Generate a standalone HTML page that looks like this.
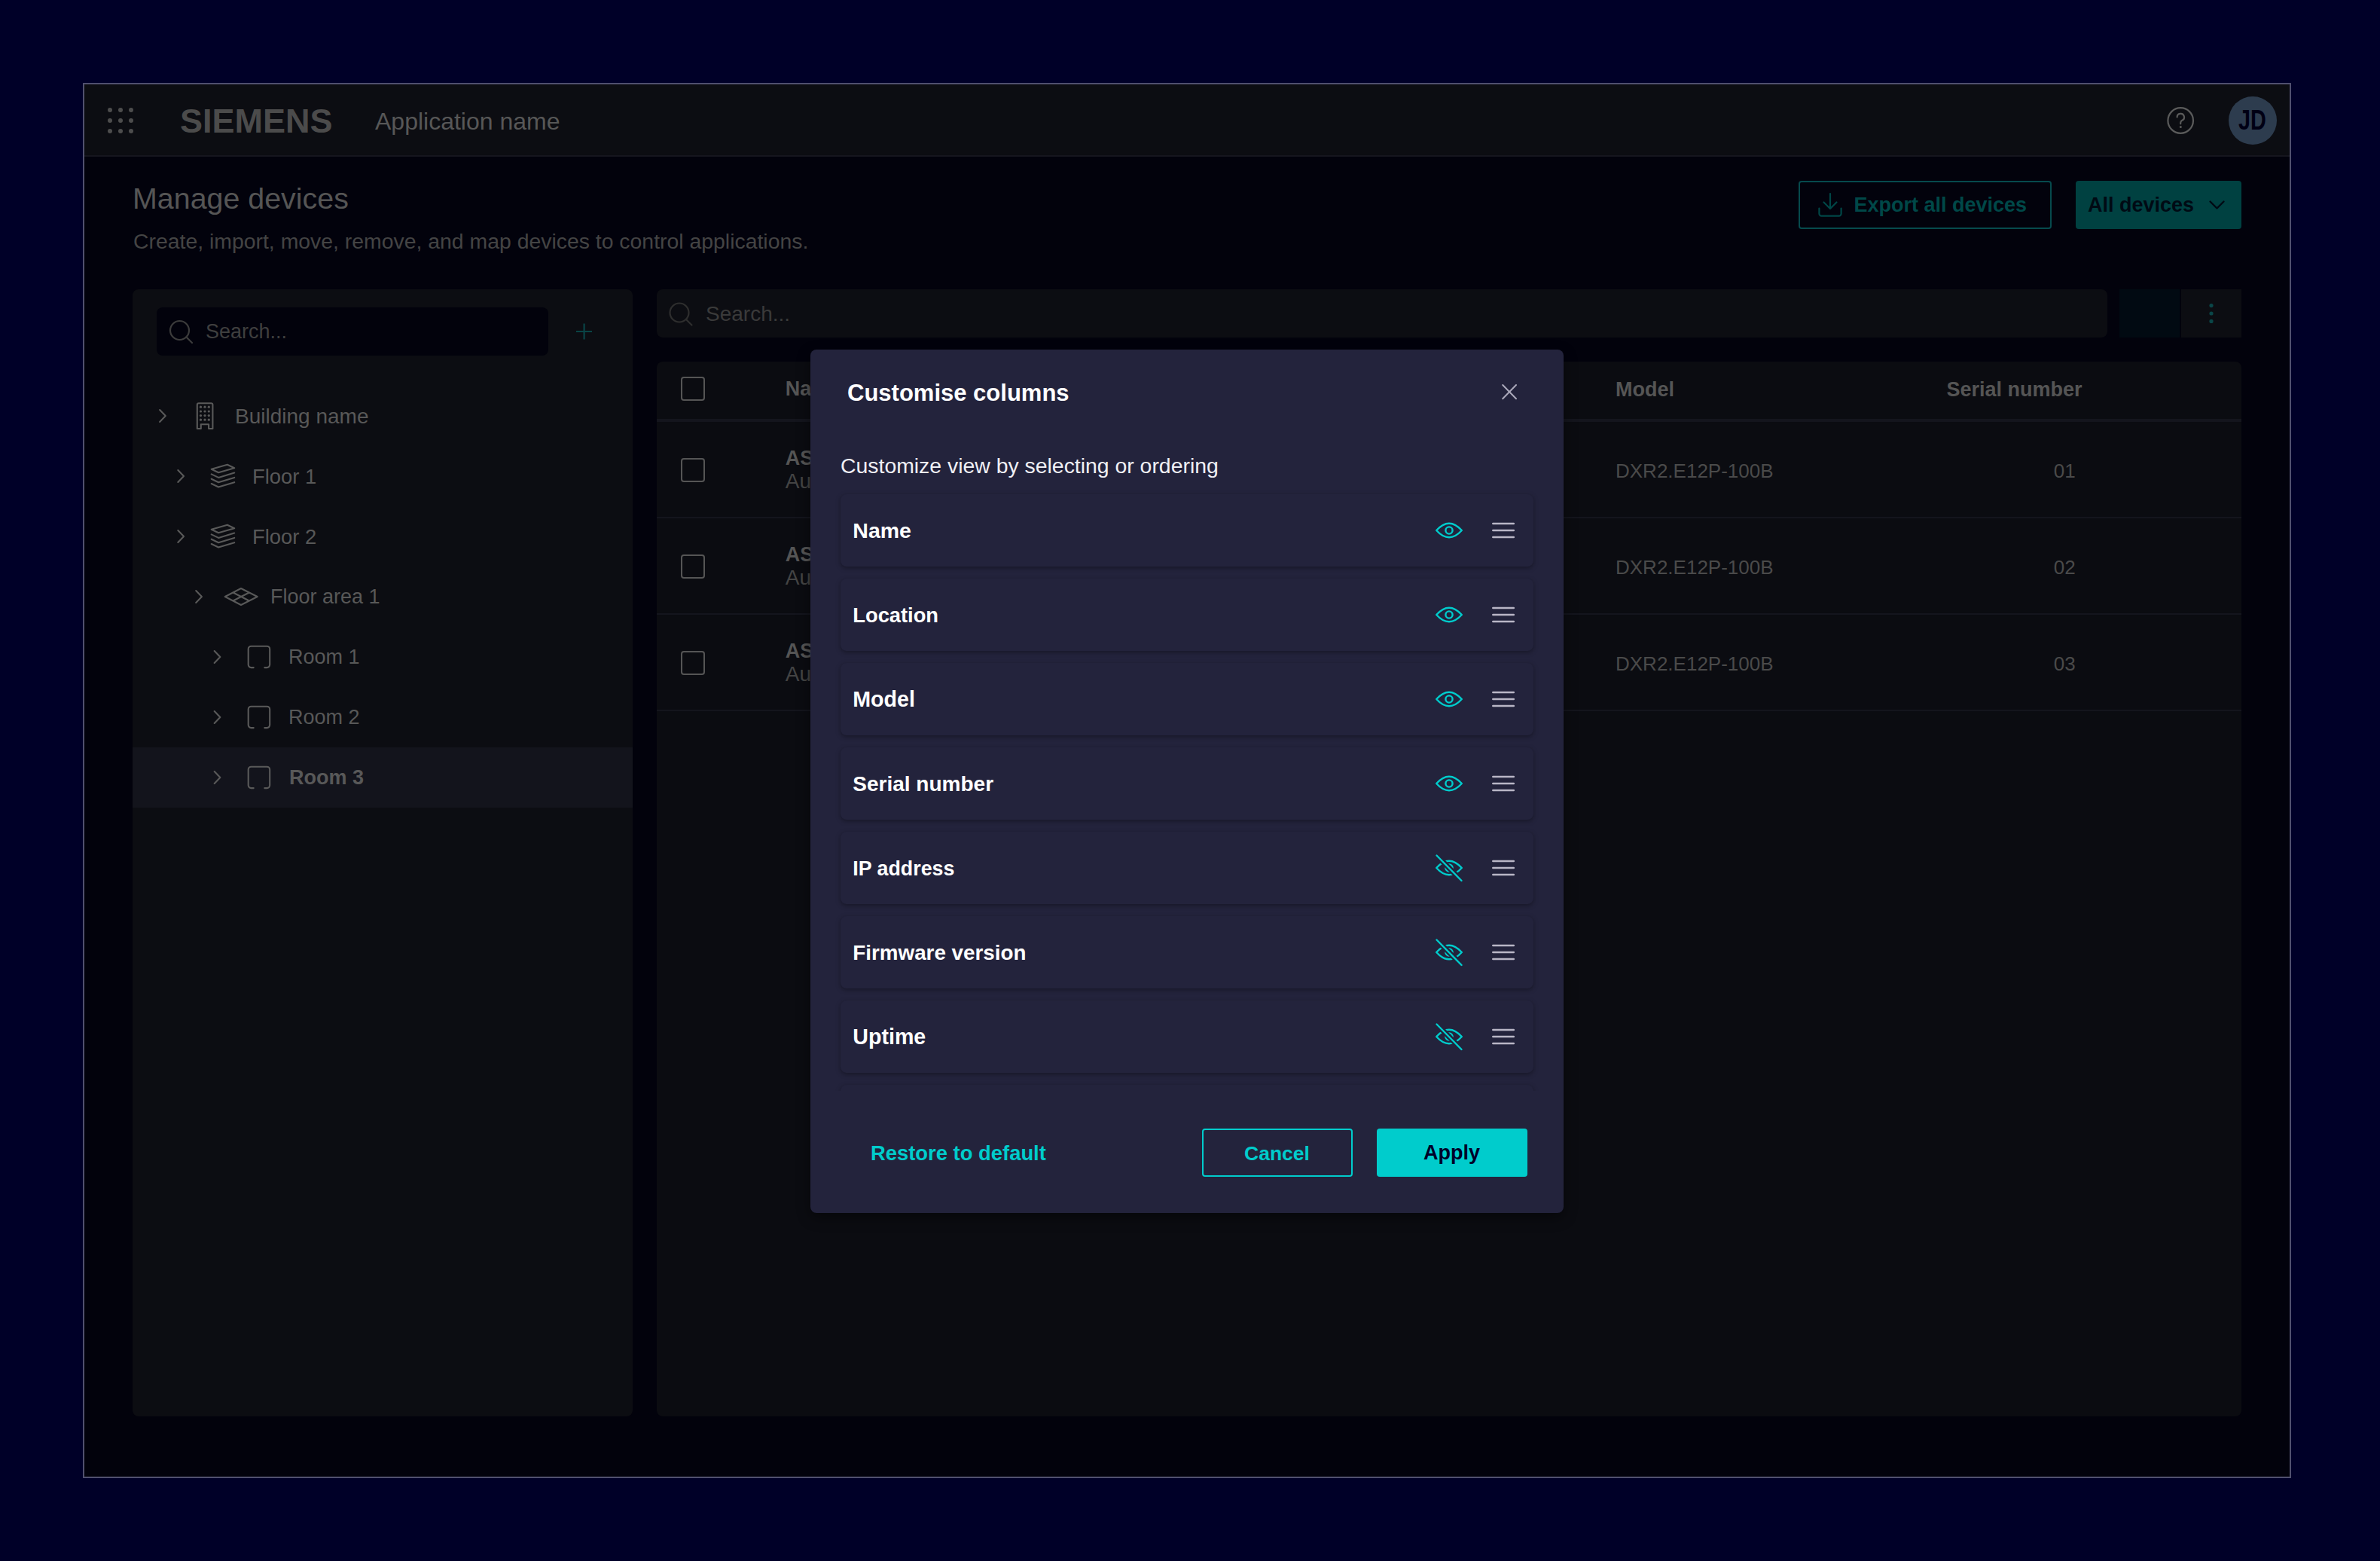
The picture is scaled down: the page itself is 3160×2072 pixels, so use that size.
<!DOCTYPE html>
<html><head><meta charset="utf-8">
<style>
html,body{margin:0;padding:0;}
body{width:3160px;height:2072px;overflow:hidden;background:#000028;position:relative;font-family:"Liberation Sans",sans-serif;}
.a{position:absolute;}
.t{position:absolute;white-space:nowrap;line-height:1;}
.b{font-weight:700;}
svg.i{position:absolute;left:0;top:0;overflow:visible;}
</style></head><body>
<div class="a" style="left:110px;top:110px;width:2932px;height:1852px;box-sizing:border-box;border:2px solid #50506e;background:#02020c;"></div>
<div class="a" style="left:112px;top:112px;width:2928px;height:94px;background:#0c0d12;"></div>
<div class="a" style="left:112px;top:206px;width:2928px;height:2px;background:#16161e;"></div>
<svg class="i" width="3160" height="2072"><g fill="#4d4d4d"><circle cx="146" cy="146" r="3"/><circle cx="146" cy="160" r="3"/><circle cx="146" cy="174" r="3"/><circle cx="160" cy="146" r="3"/><circle cx="160" cy="160" r="3"/><circle cx="160" cy="174" r="3"/><circle cx="174" cy="146" r="3"/><circle cx="174" cy="160" r="3"/><circle cx="174" cy="174" r="3"/></g></svg>
<div class="t b" style="left:239px;top:137.9px;font-size:45px;color:#4b4b4b;">SIEMENS</div>
<div class="t" style="left:498px;top:145.3px;font-size:32px;color:#575757;">Application name</div>
<svg class="i" width="3160" height="2072">
<circle cx="2895.2" cy="160" r="16.8" fill="none" stroke="#5a5a5a" stroke-width="2.2"/>
<path d="M2890.6 155.5 a4.7 4.7 0 1 1 6.6 4.3 c-1.5 0.8 -2 1.6 -2 3.2 v1.3" fill="none" stroke="#5a5a5a" stroke-width="2.2" stroke-linecap="round"/>
<circle cx="2895.3" cy="168.6" r="1.5" fill="#5a5a5a"/>
<circle cx="2991" cy="160" r="32" fill="#2d3c4e"/>
</svg>
<div class="t b" style="left:2971.6px;top:141.7px;font-size:36px;color:#000014;transform:scaleX(0.8);transform-origin:0 0;">JD</div>
<div class="t" style="left:176px;top:244.3px;font-size:39.4px;color:#555555;">Manage devices</div>
<div class="t" style="left:177px;top:306.2px;font-size:28.4px;color:#444444;">Create, import, move, remove, and map devices to control applications.</div>
<div class="a" style="left:2388px;top:240px;width:336px;height:64px;box-sizing:border-box;border:2px solid #064a4d;border-radius:4px;"></div>
<svg class="i" width="3160" height="2072"><g fill="none" stroke="#004646" stroke-width="2.2" stroke-linecap="round" stroke-linejoin="round">
<path d="M2430 257 V276.5 M2421.5 268.5 L2430 277 L2438.5 268.5"/>
<path d="M2415.4 276.6 V283.6 a3 3 0 0 0 3 3 H2441.6 a3 3 0 0 0 3 -3 V276.6"/>
</g></svg>
<div class="t b" style="left:2461.5px;top:259.3px;font-size:27px;color:#004848;">Export all devices</div>
<div class="a" style="left:2756px;top:240px;width:220px;height:64px;background:#004141;border-radius:4px;"></div>
<div class="t b" style="left:2772px;top:259.3px;font-size:27px;color:#000a14;">All devices</div>
<svg class="i" width="3160" height="2072"><path d="M2934.5 267.5 L2943.5 276.5 L2952.5 267.5" fill="none" stroke="#000a14" stroke-width="2.4" stroke-linecap="round" stroke-linejoin="round"/></svg>
<div class="a" style="left:176px;top:384px;width:664px;height:1496px;background:#0c0d12;border-radius:8px;"></div>
<div class="a" style="left:208px;top:408px;width:520px;height:64px;background:#02020c;border-radius:8px;"></div>
<svg class="i" width="3160" height="2072"><g fill="none" stroke="#3c3c3c" stroke-width="2.2" stroke-linecap="round">
<circle cx="238.5" cy="438.5" r="12.5"/><path d="M247.5 447.5 L255 455"/></g>
<path d="M775.6 429.5 V450.5 M765 440 H786" fill="none" stroke="#094446" stroke-width="2.2"/>
</svg>
<div class="t" style="left:273px;top:427.1px;font-size:27px;color:#3f3f3f;">Search...</div>
<div class="a" style="left:176px;top:992px;width:664px;height:80px;background:#13141c;"></div>
<svg class="i" width="3160" height="2072"><g fill="none" stroke="#595959" stroke-width="2.1" stroke-linecap="round" stroke-linejoin="round"><path d="M212.1 544 L219.79999999999998 552 L212.1 560"/><path d="M261.8 569 V537.3 a2 2 0 0 1 2 -2 H280.4 a2 2 0 0 1 2 2 V569 H277.1 V563.2 H266.8 V569 Z"/><circle cx="266.5" cy="540.2" r="1.6" fill="#595959" stroke="none"/><circle cx="266.5" cy="546" r="1.6" fill="#595959" stroke="none"/><circle cx="266.5" cy="551.6" r="1.6" fill="#595959" stroke="none"/><circle cx="266.5" cy="557.2" r="1.6" fill="#595959" stroke="none"/><circle cx="272" cy="540.2" r="1.6" fill="#595959" stroke="none"/><circle cx="272" cy="546" r="1.6" fill="#595959" stroke="none"/><circle cx="272" cy="551.6" r="1.6" fill="#595959" stroke="none"/><circle cx="272" cy="557.2" r="1.6" fill="#595959" stroke="none"/><circle cx="277.3" cy="540.2" r="1.6" fill="#595959" stroke="none"/><circle cx="277.3" cy="546" r="1.6" fill="#595959" stroke="none"/><circle cx="277.3" cy="551.6" r="1.6" fill="#595959" stroke="none"/><circle cx="277.3" cy="557.2" r="1.6" fill="#595959" stroke="none"/><path d="M236.3 624 L244.0 632 L236.3 640"/><path d="M280.7 622.7 L301.8 616.7 L311.2 621.3 L290.1 627.2 Z"/><path d="M280.7 629.4 L290.1 633.9 L311.2 627.6"/><path d="M280.7 635.6999999999999 L290.1 640.1999999999999 L311.2 633.9"/><path d="M280.7 642.0 L290.1 646.5 L311.2 640.2"/><path d="M236.3 704 L244.0 712 L236.3 720"/><path d="M280.7 702.7 L301.8 696.7 L311.2 701.3 L290.1 707.2 Z"/><path d="M280.7 709.4 L290.1 713.9 L311.2 707.6"/><path d="M280.7 715.6999999999999 L290.1 720.1999999999999 L311.2 713.9"/><path d="M280.7 722.0 L290.1 726.5 L311.2 720.2"/><path d="M260.2 784 L267.90000000000003 792 L260.2 800"/><path d="M298.75 792 L320 781 L341.7 792 L320 803 Z M309.4 786.5 L330.9 797.5 M309.4 797.5 L330.9 786.5"/><path d="M284.65 864 L292.35 872 L284.65 880"/><path d="M336.7 886.1 H333.5 a3.8 3.8 0 0 1 -3.8 -3.8 V861.5 a3.8 3.8 0 0 1 3.8 -3.8 H354.4 a3.8 3.8 0 0 1 3.8 3.8 V882.3 a3.8 3.8 0 0 1 -3.8 3.8 H351.3"/><path d="M284.65 944 L292.35 952 L284.65 960"/><path d="M336.7 966.1 H333.5 a3.8 3.8 0 0 1 -3.8 -3.8 V941.5 a3.8 3.8 0 0 1 3.8 -3.8 H354.4 a3.8 3.8 0 0 1 3.8 3.8 V962.3 a3.8 3.8 0 0 1 -3.8 3.8 H351.3"/><path d="M284.65 1024 L292.35 1032 L284.65 1040"/><path d="M336.7 1046.1 H333.5 a3.8 3.8 0 0 1 -3.8 -3.8 V1021.5 a3.8 3.8 0 0 1 3.8 -3.8 H354.4 a3.8 3.8 0 0 1 3.8 3.8 V1042.3 a3.8 3.8 0 0 1 -3.8 3.8 H351.3"/></g></svg>
<div class="t" style="left:312px;top:538.5px;font-size:28px;color:#585858;">Building name</div>
<div class="t" style="left:335px;top:619.0px;font-size:27.4px;color:#585858;">Floor 1</div>
<div class="t" style="left:335px;top:699.0px;font-size:27.4px;color:#585858;">Floor 2</div>
<div class="t" style="left:359px;top:779.3px;font-size:27px;color:#585858;">Floor area 1</div>
<div class="t" style="left:383px;top:859.3px;font-size:27px;color:#585858;">Room 1</div>
<div class="t" style="left:383px;top:939.3px;font-size:27px;color:#585858;">Room 2</div>
<div class="t b" style="left:384px;top:1019.3px;font-size:27px;color:#585858;">Room 3</div>
<div class="a" style="left:872px;top:384px;width:1926px;height:64px;background:#0c0d12;border-radius:8px;"></div>
<div class="a" style="left:2814px;top:384px;width:80px;height:64px;background:#010a12;"></div>
<div class="a" style="left:2896px;top:384px;width:80px;height:64px;background:#0c0d12;"></div>
<svg class="i" width="3160" height="2072"><g fill="none" stroke="#2e2e2e" stroke-width="2.2" stroke-linecap="round">
<circle cx="902" cy="415" r="12.5"/><path d="M911 424 L918.5 431.5"/></g>
<g fill="#0a4648"><circle cx="2936" cy="405.6" r="2.6"/><circle cx="2936" cy="416" r="2.6"/><circle cx="2936" cy="426.4" r="2.6"/></g>
</svg>
<div class="t" style="left:937px;top:403.0px;font-size:28px;color:#3a3a3a;">Search...</div>
<div class="a" style="left:872px;top:480px;width:2104px;height:1400px;background:#0b0c11;border-radius:8px;"></div>
<div class="a" style="left:872px;top:556px;width:2104px;height:4px;background:#14151d;"></div>
<div class="a" style="left:872px;top:686px;width:2104px;height:2px;background:#14151d;"></div>
<div class="a" style="left:872px;top:814px;width:2104px;height:2px;background:#14151d;"></div>
<div class="a" style="left:872px;top:942px;width:2104px;height:2px;background:#14151d;"></div>
<div class="a" style="left:904px;top:500px;width:32px;height:32px;box-sizing:border-box;border:2px solid #555555;border-radius:4px;"></div>
<div class="a" style="left:904px;top:608px;width:32px;height:32px;box-sizing:border-box;border:2px solid #555555;border-radius:4px;"></div>
<div class="a" style="left:904px;top:736px;width:32px;height:32px;box-sizing:border-box;border:2px solid #555555;border-radius:4px;"></div>
<div class="a" style="left:904px;top:864px;width:32px;height:32px;box-sizing:border-box;border:2px solid #555555;border-radius:4px;"></div>
<div class="t b" style="left:1042.8px;top:502.6px;font-size:27px;color:#555555;">Name</div>
<div class="t b" style="left:2145px;top:503.9px;font-size:27px;color:#555555;">Model</div>
<div class="t b" style="left:2584.5px;top:503.9px;font-size:27px;color:#555555;">Serial number</div>
<div class="t b" style="left:1042.8px;top:594.6px;font-size:27px;color:#555555;">ASAP-01</div>
<div class="t" style="left:1042.8px;top:625.3px;font-size:28px;color:#444444;">Automation station</div>
<div class="t" style="left:2145px;top:611.8px;font-size:26px;color:#4a4a4a;">DXR2.E12P-100B</div>
<div class="t" style="left:2726.7px;top:611.8px;font-size:26px;color:#4a4a4a;">01</div>
<div class="t b" style="left:1042.8px;top:722.6px;font-size:27px;color:#555555;">ASAP-02</div>
<div class="t" style="left:1042.8px;top:753.3px;font-size:28px;color:#444444;">Automation station</div>
<div class="t" style="left:2145px;top:739.8px;font-size:26px;color:#4a4a4a;">DXR2.E12P-100B</div>
<div class="t" style="left:2726.7px;top:739.8px;font-size:26px;color:#4a4a4a;">02</div>
<div class="t b" style="left:1042.8px;top:850.6px;font-size:27px;color:#555555;">ASAP-03</div>
<div class="t" style="left:1042.8px;top:881.3px;font-size:28px;color:#444444;">Automation station</div>
<div class="t" style="left:2145px;top:867.8px;font-size:26px;color:#4a4a4a;">DXR2.E12P-100B</div>
<div class="t" style="left:2726.7px;top:867.8px;font-size:26px;color:#4a4a4a;">03</div>
<div class="a" style="left:1076px;top:464px;width:1000px;height:1146px;background:#23233c;border-radius:8px;box-shadow:0 6px 18px rgba(0,0,0,0.45);"></div>
<div class="t b" style="left:1125px;top:506.0px;font-size:31px;color:#ffffff;">Customise columns</div>
<svg class="i" width="3160" height="2072"><path d="M1995.2 511 L2013 529.2 M2013 511 L1995.2 529.2" fill="none" stroke="#aaa8ba" stroke-width="2" stroke-linecap="round"/></svg>
<div class="t" style="left:1116px;top:603.5px;font-size:28.4px;color:#f0f0f5;">Customize view by selecting or ordering</div>
<div class="a" style="left:1076px;top:640px;width:1000px;height:808px;overflow:hidden;">
<div class="a" style="left:40px;top:16px;width:920px;height:96px;background:#23233c;border-radius:8px;box-shadow:0 2px 6px rgba(0,0,0,0.35);"></div>
<div class="a" style="left:40px;top:128px;width:920px;height:96px;background:#23233c;border-radius:8px;box-shadow:0 2px 6px rgba(0,0,0,0.35);"></div>
<div class="a" style="left:40px;top:240px;width:920px;height:96px;background:#23233c;border-radius:8px;box-shadow:0 2px 6px rgba(0,0,0,0.35);"></div>
<div class="a" style="left:40px;top:352px;width:920px;height:96px;background:#23233c;border-radius:8px;box-shadow:0 2px 6px rgba(0,0,0,0.35);"></div>
<div class="a" style="left:40px;top:464px;width:920px;height:96px;background:#23233c;border-radius:8px;box-shadow:0 2px 6px rgba(0,0,0,0.35);"></div>
<div class="a" style="left:40px;top:576px;width:920px;height:96px;background:#23233c;border-radius:8px;box-shadow:0 2px 6px rgba(0,0,0,0.35);"></div>
<div class="a" style="left:40px;top:688px;width:920px;height:96px;background:#23233c;border-radius:8px;box-shadow:0 2px 6px rgba(0,0,0,0.35);"></div>
<div class="a" style="left:40px;top:800px;width:920px;height:96px;background:#23233c;border-radius:8px;box-shadow:0 2px 6px rgba(0,0,0,0.35);"></div>
<svg class="i" width="1000" height="808"><g fill="none" stroke="#00cccc" stroke-width="2.4" stroke-linejoin="round"><path d="M831.2 64 Q848 45.4 864.8 64 Q848 82.6 831.2 64 Z"/><circle cx="848" cy="64" r="4.6"/></g><g stroke="#b9b6c6" stroke-width="2.5" stroke-linecap="round"><path d="M906.3 55 H933.8 M906.3 64 H933.8 M906.3 73 H933.8"/></g><g fill="none" stroke="#00cccc" stroke-width="2.4" stroke-linejoin="round"><path d="M831.2 176 Q848 157.4 864.8 176 Q848 194.6 831.2 176 Z"/><circle cx="848" cy="176" r="4.6"/></g><g stroke="#b9b6c6" stroke-width="2.5" stroke-linecap="round"><path d="M906.3 167 H933.8 M906.3 176 H933.8 M906.3 185 H933.8"/></g><g fill="none" stroke="#00cccc" stroke-width="2.4" stroke-linejoin="round"><path d="M831.2 288 Q848 269.4 864.8 288 Q848 306.6 831.2 288 Z"/><circle cx="848" cy="288" r="4.6"/></g><g stroke="#b9b6c6" stroke-width="2.5" stroke-linecap="round"><path d="M906.3 279 H933.8 M906.3 288 H933.8 M906.3 297 H933.8"/></g><g fill="none" stroke="#00cccc" stroke-width="2.4" stroke-linejoin="round"><path d="M831.2 400 Q848 381.4 864.8 400 Q848 418.6 831.2 400 Z"/><circle cx="848" cy="400" r="4.6"/></g><g stroke="#b9b6c6" stroke-width="2.5" stroke-linecap="round"><path d="M906.3 391 H933.8 M906.3 400 H933.8 M906.3 409 H933.8"/></g><g fill="none" stroke-linecap="round" stroke-linejoin="round"><path stroke="#00cccc" stroke-width="2.4" d="M831.2 512 Q848 493.4 864.8 512 Q848 530.6 831.2 512 Z"/><circle stroke="#00cccc" stroke-width="2.4" cx="848" cy="512" r="4.6"/><path stroke="#23233c" stroke-width="7" stroke-linecap="butt" d="M835 499 L861 525.2"/><path stroke="#00cccc" stroke-width="2.4" d="M831.5 495.5 L864.5 529"/></g><g stroke="#b9b6c6" stroke-width="2.5" stroke-linecap="round"><path d="M906.3 503 H933.8 M906.3 512 H933.8 M906.3 521 H933.8"/></g><g fill="none" stroke-linecap="round" stroke-linejoin="round"><path stroke="#00cccc" stroke-width="2.4" d="M831.2 624 Q848 605.4 864.8 624 Q848 642.6 831.2 624 Z"/><circle stroke="#00cccc" stroke-width="2.4" cx="848" cy="624" r="4.6"/><path stroke="#23233c" stroke-width="7" stroke-linecap="butt" d="M835 611 L861 637.2"/><path stroke="#00cccc" stroke-width="2.4" d="M831.5 607.5 L864.5 641"/></g><g stroke="#b9b6c6" stroke-width="2.5" stroke-linecap="round"><path d="M906.3 615 H933.8 M906.3 624 H933.8 M906.3 633 H933.8"/></g><g fill="none" stroke-linecap="round" stroke-linejoin="round"><path stroke="#00cccc" stroke-width="2.4" d="M831.2 736 Q848 717.4 864.8 736 Q848 754.6 831.2 736 Z"/><circle stroke="#00cccc" stroke-width="2.4" cx="848" cy="736" r="4.6"/><path stroke="#23233c" stroke-width="7" stroke-linecap="butt" d="M835 723 L861 749.2"/><path stroke="#00cccc" stroke-width="2.4" d="M831.5 719.5 L864.5 753"/></g><g stroke="#b9b6c6" stroke-width="2.5" stroke-linecap="round"><path d="M906.3 727 H933.8 M906.3 736 H933.8 M906.3 745 H933.8"/></g><g fill="none" stroke-linecap="round" stroke-linejoin="round"><path stroke="#00cccc" stroke-width="2.4" d="M831.2 848 Q848 829.4 864.8 848 Q848 866.6 831.2 848 Z"/><circle stroke="#00cccc" stroke-width="2.4" cx="848" cy="848" r="4.6"/><path stroke="#23233c" stroke-width="7" stroke-linecap="butt" d="M835 835 L861 861.2"/><path stroke="#00cccc" stroke-width="2.4" d="M831.5 831.5 L864.5 865"/></g><g stroke="#b9b6c6" stroke-width="2.5" stroke-linecap="round"><path d="M906.3 839 H933.8 M906.3 848 H933.8 M906.3 857 H933.8"/></g></svg>
<div class="t b" style="left:56.299999999999955px;top:50.2px;font-size:28.5px;color:#ffffff;">Name</div>
<div class="t b" style="left:56.299999999999955px;top:163.2px;font-size:27.3px;color:#ffffff;">Location</div>
<div class="t b" style="left:56.299999999999955px;top:274.1px;font-size:28.6px;color:#ffffff;">Model</div>
<div class="t b" style="left:56.299999999999955px;top:386.6px;font-size:28.0px;color:#ffffff;">Serial number</div>
<div class="t b" style="left:56.299999999999955px;top:499.6px;font-size:26.8px;color:#ffffff;">IP address</div>
<div class="t b" style="left:56.299999999999955px;top:610.8px;font-size:27.8px;color:#ffffff;">Firmware version</div>
<div class="t b" style="left:56.299999999999955px;top:722.1px;font-size:28.6px;color:#ffffff;">Uptime</div>
<div class="t b" style="left:56.299999999999955px;top:834.6px;font-size:28px;color:#ffffff;">Status</div>
</div>
<div class="t b" style="left:1156px;top:1516.8px;font-size:27.4px;color:#00cccc;">Restore to default</div>
<div class="a" style="left:1596px;top:1498px;width:200px;height:64px;box-sizing:border-box;border:2px solid #00cccc;border-radius:4px;"></div>
<div class="t b" style="left:1652px;top:1517.6px;font-size:26.5px;color:#00cccc;">Cancel</div>
<div class="a" style="left:1828px;top:1498px;width:200px;height:64px;background:#00cccc;border-radius:4px;"></div>
<div class="t b" style="left:1890px;top:1517.1px;font-size:27px;color:#000028;">Apply</div>
</body></html>
